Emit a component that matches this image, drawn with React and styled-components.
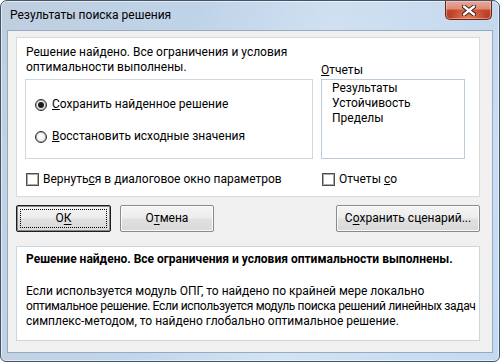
import React from 'react'
import styled, { createGlobalStyle } from 'styled-components'

const GlobalStyle = createGlobalStyle`
    html, body {
        margin: 0;
        padding: 0;
        background: #ffffff;
    }
    body {
        font-family: Roboto, "Noto Sans", sans-serif;
        font-size: 12px;
        color: #000;
    }
    * {
        box-sizing: border-box;
    }
`

function App() {
    return (
        <>
            <GlobalStyle />
            <Window>
                <TitleBar>
                    <Title>Результаты поиска решения</Title>
                    <CloseButton>
                        <svg width="14" height="11" viewBox="0 0 14 11">
                            <path d="M2 1.5 L12 9.5 M12 1.5 L2 9.5" stroke="#3b1a14" strokeWidth="4.2" strokeLinecap="round" />
                            <path d="M2 1.5 L12 9.5 M12 1.5 L2 9.5" stroke="#ffffff" strokeWidth="2.4" strokeLinecap="round" />
                        </svg>
                    </CloseButton>
                </TitleBar>

                <Client>
                    <Panel>
                        <PanelGrid>
                            <Message>Решение найдено. Все ограничения и условия оптимальности выполнены.</Message>
                            <FieldLabel><u>О</u>тчеты</FieldLabel>

                            <GroupBox>
                                <RadioRow>
                                    <Radio checked />
                                    <span><u>С</u>охранить найденное решение</span>
                                </RadioRow>
                                <RadioRow>
                                    <Radio />
                                    <span><u>В</u>осстановить исходные значения</span>
                                </RadioRow>
                            </GroupBox>
                            <ListBox>
                                <li>Результаты</li>
                                <li>Устойчивость</li>
                                <li>Пределы</li>
                            </ListBox>

                            <CheckRow>
                                <CheckBox />
                                <span>Вернуть<u>с</u>я в диалоговое окно параметров</span>
                            </CheckRow>
                            <CheckRow>
                                <CheckBox />
                                <span>Отчеты <u>с</u>о</span>
                            </CheckRow>
                        </PanelGrid>
                    </Panel>

                    <ButtonRow>
                        <Button width={95} isDefault>
                            <FocusRect>О<u>К</u></FocusRect>
                        </Button>
                        <Button width={94}>О<u>т</u>мена</Button>
                        <Spacer />
                        <Button width={144}>С<u>о</u>хранить сценарий...</Button>
                    </ButtonRow>

                    <InfoPanel>
                        <InfoTitle>Решение найдено. Все ограничения и условия оптимальности выполнены.</InfoTitle>
                        <InfoText>
                            <Line>Если используется модуль ОПГ, то найдено по крайней мере локально</Line>
                            <Line tight>оптимальное решение. Если используется модуль поиска решений линейных задач</Line>
                            <Line>симплекс-методом, то найдено глобально оптимальное решение.</Line>
                        </InfoText>
                    </InfoPanel>
                </Client>
            </Window>
        </>
    )
}

export default App

const Window = styled.div`
    width: 500px;
    height: 362px;
    border: 1px solid #44556a;
    border-radius: 7px 7px 6px 6px;
    box-shadow: inset 0 0 0 1px rgba(255, 255, 255, 0.55);
    background:
        linear-gradient(100deg, rgba(190, 200, 212, 0.55) 0%, rgba(190, 205, 222, 0.3) 35%, rgba(255, 255, 255, 0.25) 60%, rgba(255, 255, 255, 0) 100%),
        linear-gradient(to bottom, #bfd5ec 0%, #c6dcf2 40%, #c3daf1 100%);
    display: flex;
    flex-direction: column;
    overflow: hidden;
`

const TitleBar = styled.div`
    height: 29px;
    display: flex;
    align-items: center;
    padding-left: 9px;
`

const Title = styled.div`
    flex: 1;
    font-size: 12px;
    line-height: 15px;
    color: #000;
`

const CloseButton = styled.div`
    align-self: flex-start;
    margin-right: 7px;
    width: 47px;
    height: 19px;
    border: 1px solid #6a2518;
    border-top: none;
    border-radius: 0 0 5px 5px;
    background:
        radial-gradient(ellipse at 50% 110%, rgba(255, 170, 120, 0.7) 0%, rgba(255, 140, 100, 0) 60%),
        linear-gradient(to bottom, #e9a999 0%, #dc8a76 45%, #c2462d 50%, #b73b24 100%);
    box-shadow: inset 0 0 0 1px rgba(255, 220, 210, 0.45);
    display: flex;
    align-items: center;
    justify-content: center;
`

const Client = styled.div`
    flex: 1;
    margin: 0 6px 8px 6px;
    border: 1px solid #97aac0;
    background: #f0f0f0;
    padding: 6px 0 0 8px;
    display: flex;
    flex-direction: column;
`

const Panel = styled.div`
    width: 464px;
    height: 160px;
    background: #ffffff;
    border: 1px solid #dadada;
    padding: 7px 0 0 8px;
`

const PanelGrid = styled.div`
    display: grid;
    grid-template-columns: 288px 144px;
    grid-template-rows: 34px 80px auto;
    column-gap: 8px;
`

const Message = styled.div`
    line-height: 15px;
    padding-left: 1px;
    width: 280px;
`

const FieldLabel = styled.div`
    align-self: end;
    line-height: 15px;
    margin-bottom: 1px;
`

const GroupBox = styled.div`
    border: 1px solid #cfd9e2;
    padding: 17px 0 0 9px;
    display: flex;
    flex-direction: column;
    gap: 17px;
`

const RadioRow = styled.label`
    display: flex;
    align-items: center;
    gap: 5px;
    height: 15px;
    line-height: 15px;
`

const Radio = styled.span`
    width: 12px;
    height: 12px;
    border-radius: 50%;
    border: 1px solid #2a2a2a;
    background: radial-gradient(circle at 40% 35%, #ffffff 0%, #f2f2f2 60%, #d8d8d8 100%);
    box-shadow: inset 0 0 0 1px #a8a8a8;
    display: flex;
    align-items: center;
    justify-content: center;
    &::after {
        content: '';
        width: 6px;
        height: 6px;
        border-radius: 50%;
        background: ${props => props.checked ? '#1c1c1c' : 'transparent'};
    }
`

const ListBox = styled.ul`
    margin: 0;
    list-style: none;
    border: 1px solid #bccbd9;
    padding: 1px 0 0 10px;
    li {
        height: 15px;
        line-height: 15px;
    }
`

const CheckRow = styled.label`
    margin-top: 13px;
    padding-left: 1px;
    display: flex;
    align-items: center;
    gap: 4px;
    height: 15px;
    line-height: 15px;
`

const CheckBox = styled.span`
    width: 13px;
    height: 13px;
    border: 1px solid #4f4f4f;
    box-shadow: inset 0 0 0 1px #a9a9a9;
    background: #ffffff;
`

const ButtonRow = styled.div`
    width: 464px;
    margin-top: 8px;
    display: flex;
    gap: 9px;
`

const Spacer = styled.div`
    flex: 1;
`

const Button = styled.div`
    width: ${props => props.width}px;
    height: 27px;
    border: 1px solid ${props => props.isDefault ? '#1e1e1e' : '#8a8a8a'};
    border-radius: 2px;
    background: linear-gradient(to bottom, #f4f4f4 0%, #ececec 48%, #e0e0e0 52%, #d9d9d9 100%);
    box-shadow: inset 0 0 0 1px ${props => props.isDefault ? '#8a8a8a' : 'rgba(255, 255, 255, 0.8)'};
    display: flex;
    align-items: center;
    justify-content: center;
    line-height: 15px;
    padding: ${props => props.isDefault ? '3px' : '0'};
    u {
        text-underline-offset: 2px;
    }
`

const FocusRect = styled.div`
    width: 100%;
    height: 100%;
    border: 1px dotted #000;
    display: flex;
    align-items: center;
    justify-content: center;
`

const InfoPanel = styled.div`
    width: 464px;
    height: 95px;
    margin-top: 14px;
    background: #ffffff;
    border: 1px solid #ccd6df;
    padding: 5px 0 0 9px;
`

const InfoTitle = styled.div`
    font-weight: bold;
    line-height: 15px;
    white-space: nowrap;
`

const InfoText = styled.div`
    margin-top: 17px;
`

const Line = styled.div`
    line-height: 15px;
    white-space: nowrap;
    letter-spacing: ${props => props.tight ? '-0.35px' : 'normal'};
`
